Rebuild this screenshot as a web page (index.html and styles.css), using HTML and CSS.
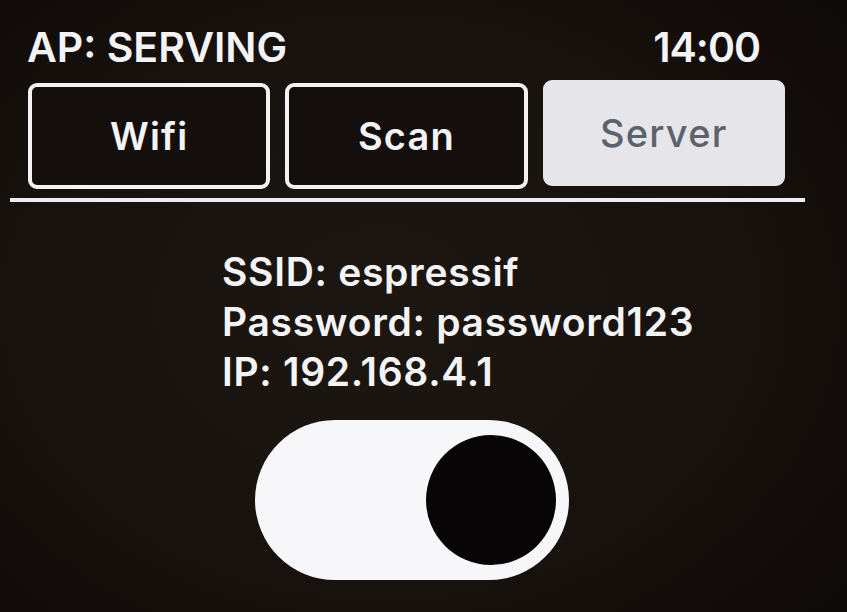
FILE: index.html
```html
<!DOCTYPE html>
<html>
<head>
<meta charset="utf-8">
<link rel="stylesheet" href="styles.css">
</head>
<body>
<div class="screen">
  <div class="status">
    <span class="status-left">AP: SERVING</span>
    <span class="status-time">14:00</span>
  </div>
  <div class="tabs">
    <div class="tab">Wifi</div>
    <div class="tab">Scan</div>
    <div class="tab tab-active">Server</div>
  </div>
  <div class="divider"></div>
  <div class="info">
    <div class="info-line">SSID: espressif</div>
    <div class="info-line">Password: password123</div>
    <div class="info-line">IP: 192.168.4.1</div>
  </div>
  <div class="toggle-row">
    <div class="toggle"><div class="knob"></div></div>
  </div>
</div>
</body>
</html>
```
FILE: styles.css
```css
html, body {
  margin: 0;
  padding: 0;
  background: #0c0907;
}
.screen {
  width: 847px;
  height: 612px;
  box-sizing: border-box;
  overflow: hidden;
  background: radial-gradient(ellipse 70% 75% at 45% 50%, #1d1712 0%, #18120e 60%, #0e0a08 100%);
  font-family: "Inter", "Noto Sans", sans-serif;
  font-weight: 600;
  color: #f4f4f6;
  display: flex;
  flex-direction: column;
}
.status {
  display: flex;
  justify-content: space-between;
  align-items: center;
  padding: 22px 87px 0 27px;
  font-size: 41px;
  line-height: 50px;
  letter-spacing: 0;
}
.status-time {
  letter-spacing: -1px;
}
.tabs {
  display: flex;
  gap: 15px;
  margin: 11px 0 0 28px;
  width: 757px;
}
.tab {
  flex: 1;
  height: 106px;
  box-sizing: border-box;
  border: 4px solid #f2f2f4;
  border-radius: 9px;
  display: flex;
  align-items: center;
  justify-content: center;
  font-size: 38px;
  letter-spacing: 1.2px;
  color: #f4f4f6;
  background: #140f0c;
}
.tab-active {
  background: #e6e6ea;
  border-color: #e6e6ea;
  color: #5c626b;
  font-weight: 500;
  margin-top: -3px;
  height: 106px;
}
.divider {
  margin: 9px 0 0 10px;
  width: 795px;
  height: 4px;
  background: #eeeef2;
}
.info {
  padding: 45px 0 0 222px;
  font-size: 39px;
  line-height: 50px;
  letter-spacing: 0.7px;
}
.toggle-row {
  padding: 23px 0 0 255px;
}
.toggle {
  width: 314px;
  height: 160px;
  border-radius: 80px;
  background: #f7f7f9;
  display: flex;
  align-items: center;
  justify-content: flex-end;
  padding-right: 13px;
  box-sizing: border-box;
}
.knob {
  width: 130px;
  height: 130px;
  border-radius: 50%;
  background: #070506;
}
```
